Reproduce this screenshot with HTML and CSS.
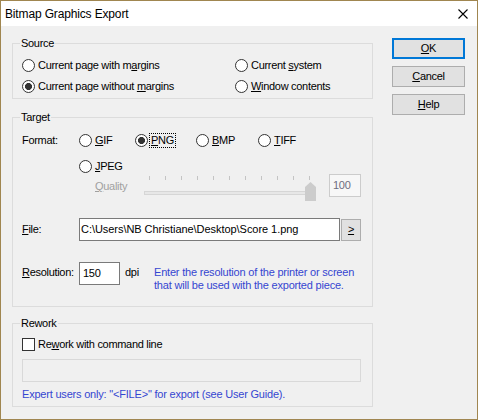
FILE: index.html
```html
<!DOCTYPE html>
<html>
<head>
<meta charset="utf-8">
<title>Bitmap Graphics Export</title>
<link rel="stylesheet" href="styles.css">
</head>
<body>
<div class="window">
  <div class="titlebar">
    <span class="title">Bitmap Graphics Export</span>
    <svg class="close" width="10" height="10" viewBox="0 0 10 10"><path d="M0.5 0.5 L9.5 9.5 M9.5 0.5 L0.5 9.5" stroke="#000" stroke-width="1.1" fill="none"/></svg>
  </div>
  <div class="body">
    <div class="main">
      <div class="group source">
        <div class="legend">Source</div>
        <div class="source-grid">
          <div class="opt"><span class="radio"></span><span>Current page with m<u>a</u>rgins</span></div>
          <div class="opt"><span class="radio"></span><span>Current <u>s</u>ystem</span></div>
          <div class="opt"><span class="radio checked"></span><span>Current page without <u>m</u>argins</span></div>
          <div class="opt"><span class="radio"></span><span><u>W</u>indow contents</span></div>
        </div>
      </div>

      <div class="group target">
        <div class="legend">Target</div>
        <div class="format-row">
          <span class="label">Format:</span>
          <div class="opt w56"><span class="radio"></span><span><u>G</u>IF</span></div>
          <div class="opt w61"><span class="radio checked"></span><span class="focus"><u>P</u>NG</span></div>
          <div class="opt w62"><span class="radio"></span><span><u>B</u>MP</span></div>
          <div class="opt"><span class="radio"></span><span><u>T</u>IFF</span></div>
        </div>
        <div class="jpeg-row">
          <div class="opt"><span class="radio"></span><span><u>J</u>PEG</span></div>
        </div>
        <div class="quality-row">
          <span class="quality-label"><u>Q</u>uality</span>
          <div class="slider">
            <div class="ticks">
              <i></i><i></i><i></i><i></i><i></i><i></i><i></i><i></i><i></i><i></i><i></i>
            </div>
            <div class="track"></div>
            <svg class="thumb" width="11" height="19" viewBox="0 0 11 19"><polygon points="0,5 5.5,0 11,5 11,19 0,19" fill="#cccccc"/></svg>
          </div>
          <div class="valuebox">100</div>
        </div>
        <div class="file-row">
          <span class="label"><u>F</u>ile:</span>
          <div class="textbox file-box">C:\Users\NB Christiane\Desktop\Score 1.png</div>
          <div class="small-btn"><u>&gt;</u></div>
        </div>
        <div class="res-row">
          <span class="label res-label"><u>R</u>esolution:</span>
          <div class="textbox res-box">150</div>
          <span class="dpi">dpi</span>
          <span class="hint">Enter the resolution of the printer or screen<br>that will be used with the exported piece.</span>
        </div>
      </div>

      <div class="group rework">
        <div class="legend">Rework</div>
        <div class="check-row"><span class="checkbox"></span><span>Re<u>w</u>ork with command line</span></div>
        <div class="cmd-box"></div>
        <div class="hint expert">Expert users only: "&lt;FILE&gt;" for export (see User Guide).</div>
      </div>
    </div>

    <div class="buttons">
      <div class="btn default"><u>O</u>K</div>
      <div class="btn"><u>C</u>ancel</div>
      <div class="btn"><u>H</u>elp</div>
    </div>
  </div>
</div>
</body>
</html>
```

FILE: styles.css
```css
* { box-sizing: border-box; }
html, body { margin: 0; padding: 0; background: #f0f0f0; }
body {
  font-family: "Liberation Sans", Arial, sans-serif;
  font-size: 11px;
  letter-spacing: -0.3px;
  line-height: 13px;
  color: #000;
}
u { text-decoration: underline; text-underline-offset: 1px; }

.window {
  width: 478px;
  height: 420px;
  border: 1px solid #a08650;
  background: #f0f0f0;
  display: flex;
  flex-direction: column;
}
.titlebar {
  height: 25px;
  background: #ffffff;
  display: flex;
  align-items: center;
  justify-content: space-between;
  padding: 0 9px 0 4px;
}
.title {
  font-size: 12px;
  letter-spacing: -0.15px;
  line-height: 16px;
  margin-top: 1px;
}
.close { display: block; margin-top: 1px; }

.body {
  display: flex;
  padding: 12px 11px 0 11px;
}
.main {
  width: 361px;
  padding-top: 5px;
  display: flex;
  flex-direction: column;
}
.buttons {
  margin-left: 19px;
  width: 73px;
  display: flex;
  flex-direction: column;
  gap: 7px;
}
.btn {
  height: 21px;
  background: #e1e1e1;
  border: 1px solid #adadad;
  display: flex;
  align-items: center;
  justify-content: center;
}
.btn.default { border: 2px solid #0078d7; }

.group {
  border: 1px solid #dcdcdc;
  padding-left: 9px;
}
.group.target { margin-top: 18px; }
.group.rework { margin-top: 16px; }
.legend {
  margin-top: -7px;
  margin-left: -2px;
  padding: 0 1px;
  height: 13px;
  width: fit-content;
  background: #f0f0f0;
}

.opt {
  display: flex;
  align-items: center;
  gap: 3px;
}
.radio {
  width: 13px;
  height: 13px;
  border: 1px solid #333333;
  border-radius: 50%;
  background: #ffffff;
  flex: none;
}
.radio.checked {
  background: radial-gradient(circle, #333333 3.2px, #ffffff 3.8px);
}

.source-grid {
  margin-top: 5px;
  padding-bottom: 1px;
  display: grid;
  grid-template-columns: 213px 1fr;
  grid-auto-rows: 21px;
}

.format-row {
  margin-top: 9px;
  height: 14px;
  display: flex;
  align-items: center;
}
.label { width: 57px; flex: none; }
.w56 { width: 56px; }
.w61 { width: 61px; }
.w62 { width: 62px; }
.focus {
  outline: 1px dotted #000;
  outline-offset: 0;
  padding: 0 1px;
  margin-left: -1px;
}
.jpeg-row {
  margin-top: 12px;
  height: 14px;
  padding-left: 57px;
  display: flex;
  align-items: center;
}
.quality-row {
  margin-top: 1px;
  height: 27px;
  padding-left: 73px;
  display: flex;
  align-items: flex-start;
}
.quality-label {
  width: 49px;
  margin-top: 6px;
  color: #a0a0a0;
  flex: none;
}
.slider {
  position: relative;
  width: 172px;
  height: 27px;
  flex: none;
}
.ticks {
  margin-top: 2px;
  margin-left: 5px;
  width: 161px;
  height: 4px;
  display: flex;
  justify-content: space-between;
}
.ticks i {
  display: block;
  width: 1px;
  height: 4px;
  background: #c4c4c4;
}
.track {
  margin-top: 11px;
  height: 4px;
  width: 168px;
  border: 1px solid #d6d6d6;
  background: #e7e7e7;
}
.thumb {
  position: absolute;
  left: 161px;
  top: 8px;
  display: block;
}
.valuebox {
  margin-left: 13px;
  width: 32px;
  height: 23px;
  border: 1px solid #cccccc;
  background: #f7f7f7;
  color: #6d6d80;
  padding: 4px 0 0 3px;
}

.file-row {
  margin-top: 17px;
  display: flex;
  align-items: center;
  height: 23px;
}
.textbox {
  height: 23px;
  background: #ffffff;
  border: 1px solid #7a7a7a;
  padding: 4px 0 0 1px;
  white-space: nowrap;
}
.file-box { width: 261px; letter-spacing: -0.05px; }
.small-btn {
  margin-left: 1px;
  width: 20px;
  height: 22px;
  background: #e1e1e1;
  border: 1px solid #adadad;
  display: flex;
  align-items: center;
  justify-content: center;
}
.res-row {
  margin-top: 21px;
  display: flex;
  align-items: flex-start;
  padding-bottom: 14px;
}
.res-label { margin-top: 4px; }
.res-box { width: 41px; padding-left: 3px; }
.dpi {
  margin-top: 4px;
  margin-left: 5px;
  width: 29px;
}
.hint {
  color: #3546d1;
  letter-spacing: -0.2px;
  margin-top: 4px;
}

.check-row {
  margin-top: 8px;
  height: 13px;
  display: flex;
  align-items: center;
  gap: 3px;
}
.checkbox {
  width: 13px;
  height: 13px;
  border: 1px solid #333333;
  background: #ffffff;
  flex: none;
}
.cmd-box {
  margin-top: 8px;
  width: 339px;
  height: 23px;
  border: 1px solid #d9d9d9;
  background: #f0f0f0;
}
.expert {
  margin-top: 6px;
  padding-bottom: 5px;
}
```
